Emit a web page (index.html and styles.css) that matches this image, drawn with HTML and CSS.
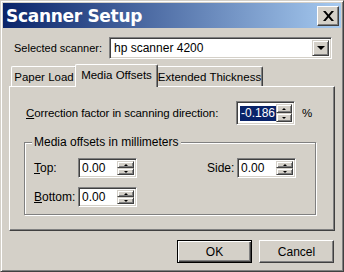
FILE: index.html
```html
<!DOCTYPE html>
<html>
	<head>
		<meta charset="UTF-8">
		<title>Scanner Setup</title>
		<link rel="stylesheet" href="styles.css">
	</head>
	<body>
		<div class="window">
			<div class="titlebar">
				<span class="title">Scanner Setup</span>
				<span class="closeBtn">
					<svg width="11" height="10" viewBox="0 0 11 10"><path d="M0 0h2.5l3 3.6 3-3.6H11L6.8 5 11 10H8.5l-3-3.6-3 3.6H0l4.2-5z" fill="#000"/></svg>
				</span>
			</div>
			<div class="content">
				<div class="scannerRow">
					<span class="label">Selected scanner:</span>
					<div class="combo">
						<span class="comboText">hp scanner 4200</span>
						<span class="comboBtn"><i class="arrowDown"></i></span>
					</div>
				</div>
				<div class="tabs">
					<span class="tab paper">Paper Load</span>
					<span class="tab active">Media Offsets</span>
					<span class="tab ext">Extended Thickness</span>
				</div>
				<div class="panel">
					<div class="corrRow">
						<span class="label"><u>C</u>orrection factor in scanning direction:</span>
						<div class="spin">
							<span class="spinText"><span class="sel">-0.186</span></span>
							<span class="spinBtns">
								<span class="sbtn"><i class="arrowUp"></i></span>
								<span class="sbtn"><i class="arrowDown small"></i></span>
							</span>
						</div>
						<span class="unit">%</span>
					</div>
					<div class="group">
						<span class="legend">Media offsets in millimeters</span>
						<div class="offRow">
							<span class="label offLabel"><u>T</u>op:</span>
							<div class="spin">
								<span class="spinText">0.00</span>
								<span class="spinBtns">
									<span class="sbtn"><i class="arrowUp"></i></span>
									<span class="sbtn"><i class="arrowDown small"></i></span>
								</span>
							</div>
							<span class="label sideLabel">Side:</span>
							<div class="spin">
								<span class="spinText">0.00</span>
								<span class="spinBtns">
									<span class="sbtn"><i class="arrowUp"></i></span>
									<span class="sbtn"><i class="arrowDown small"></i></span>
								</span>
							</div>
						</div>
						<div class="offRow">
							<span class="label offLabel"><u>B</u>ottom:</span>
							<div class="spin">
								<span class="spinText">0.00</span>
								<span class="spinBtns">
									<span class="sbtn"><i class="arrowUp"></i></span>
									<span class="sbtn"><i class="arrowDown small"></i></span>
								</span>
							</div>
						</div>
					</div>
				</div>
				<div class="buttons">
					<span class="btn default">OK</span>
					<span class="btn">Cancel</span>
				</div>
			</div>
		</div>
	</body>
</html>
```

FILE: styles.css
```css
*{
	margin: 0;
	padding: 0;
	box-sizing: border-box;
}
body{
	font: 11px "Liberation Sans", Arial, sans-serif;
	color: #000;
	background: #d4d0c8;
	white-space: nowrap;
}
.window{
	width: 344px;
	height: 272px;
	background: #d4d0c8;
	border: 1px solid;
	border-color: #d4d0c8 #404040 #404040 #d4d0c8;
	box-shadow: inset 1px 1px #fff, inset -1px -1px #808080;
	padding: 2px;
}
.titlebar{
	height: 25px;
	background: linear-gradient(to right, #0a246a, #a6caf0);
	display: flex;
	align-items: center;
	justify-content: space-between;
	padding: 0 2px 0 3px;
}
.title{
	color: #fff;
	font-weight: bold;
	font-size: 17px;
	font-family: "DejaVu Sans", sans-serif;
	letter-spacing: -0.3px;
}
.closeBtn{
	width: 22px;
	height: 20px;
	background: #d4d0c8;
	border: 1px solid;
	border-color: #fff #404040 #404040 #fff;
	box-shadow: inset -1px -1px #808080;
	display: flex;
	align-items: center;
	justify-content: center;
}
.content{
	padding: 0 6px;
}
.scannerRow{
	display: flex;
	align-items: center;
	margin-top: 9px;
	height: 22px;
	padding-left: 5px;
}
.scannerRow .label{
	width: 95px;
}
.combo{
	width: 223px;
	height: 22px;
	background: #fff;
	border: 1px solid;
	border-color: #808080 #fff #fff #808080;
	box-shadow: inset 1px 1px #404040, inset -1px -1px #d4d0c8;
	display: flex;
	align-items: center;
	padding: 2px;
	font-size: 12px;
}
.comboText{
	flex: 1;
	padding-left: 2px;
}
.comboBtn{
	width: 17px;
	height: 16px;
	background: #d4d0c8;
	border: 1px solid;
	border-color: #d4d0c8 #404040 #404040 #d4d0c8;
	box-shadow: inset 1px 1px #fff, inset -1px -1px #808080;
	display: flex;
	align-items: center;
	justify-content: center;
}
.arrowDown{
	width: 0;
	height: 0;
	border-left: 4px solid transparent;
	border-right: 4px solid transparent;
	border-top: 4px solid #000;
}
.arrowDown.small{
	border-left-width: 2px;
	border-right-width: 2px;
	border-top-width: 2px;
}
.arrowUp{
	width: 0;
	height: 0;
	border-left: 2px solid transparent;
	border-right: 2px solid transparent;
	border-bottom: 2px solid #000;
}
.tabs{
	display: flex;
	align-items: flex-end;
	height: 22px;
	margin-top: 5px;
	padding-left: 2px;
	position: relative;
	z-index: 1;
}
.tab{
	height: 20px;
	padding-top: 1px;
	display: flex;
	align-items: center;
	justify-content: center;
	border: 1px solid #fff;
	border-bottom: none;
	border-right-color: #404040;
	border-radius: 2px 2px 0 0;
	box-shadow: inset -1px 0 #808080;
	font-size: 11.5px;
}
.tab.paper{
	width: 66px;
}
.tab.ext{
	width: 107px;
}
.tab.active{
	width: 83px;
	height: 23px;
	margin: 0 -2px -1px;
	padding: 0 0 3px;
	background: #d4d0c8;
	position: relative;
}
.panel{
	height: 145px;
	border: 1px solid;
	border-color: #fff #404040 #404040 #fff;
	box-shadow: inset -1px -1px #808080;
	padding: 14px 0 0 14px;
}
.corrRow{
	display: flex;
	align-items: center;
	height: 24px;
	margin-left: 2px;
	font-size: 11.5px;
}
.corrRow .label{
	width: 210px;
	letter-spacing: -0.1px;
}
.spin{
	width: 59px;
	height: 21px;
	background: #fff;
	border: 1px solid;
	border-color: #808080 #fff #fff #808080;
	box-shadow: inset 1px 1px #404040, inset -1px -1px #d4d0c8;
	display: flex;
	padding: 2px;
	font-size: 12px;
}
.corrRow .spin{
	height: 24px;
}
.spinText{
	flex: 1;
	padding-left: 1px;
	display: flex;
	align-items: center;
	line-height: 15px;
}
.sel{
	background: #0a246a;
	color: #fff;
	padding: 0 1px;
}
.spinBtns{
	width: 17px;
	display: flex;
	flex-direction: column;
}
.sbtn{
	flex: 1;
	background: #d4d0c8;
	border: 1px solid;
	border-color: #d4d0c8 #404040 #404040 #d4d0c8;
	box-shadow: inset 1px 1px #fff, inset -1px -1px #808080;
	display: flex;
	align-items: center;
	justify-content: center;
}
.unit{
	margin-left: 7px;
}
.group{
	position: relative;
	width: 292px;
	height: 73px;
	margin-top: 17px;
	border: 1px solid #808080;
	box-shadow: 1px 1px #fff, inset 1px 1px #fff;
	padding: 15px 0 0 9px;
	font-size: 12px;
}
.legend{
	position: absolute;
	left: 7px;
	top: -8px;
	background: #d4d0c8;
	padding: 0 2px;
}
.offRow{
	display: flex;
	align-items: center;
	height: 20px;
	margin-bottom: 9px;
}
.offLabel{
	width: 44px;
}
.sideLabel{
	margin-left: 70px;
	width: 30px;
}
.offRow .spin{
	height: 20px;
}
.buttons{
	display: flex;
	justify-content: flex-end;
	gap: 7px;
	margin-top: 9px;
	padding-right: 1px;
	font-size: 12px;
}
.btn{
	width: 75px;
	height: 23px;
	display: flex;
	align-items: center;
	justify-content: center;
	background: #d4d0c8;
	border: 1px solid;
	border-color: #fff #404040 #404040 #fff;
	box-shadow: inset -1px -1px #808080;
}
.btn.default{
	border: 1px solid #000;
	box-shadow: inset 1px 1px #fff, inset -1px -1px #404040, inset -2px -2px #808080;
}
```
